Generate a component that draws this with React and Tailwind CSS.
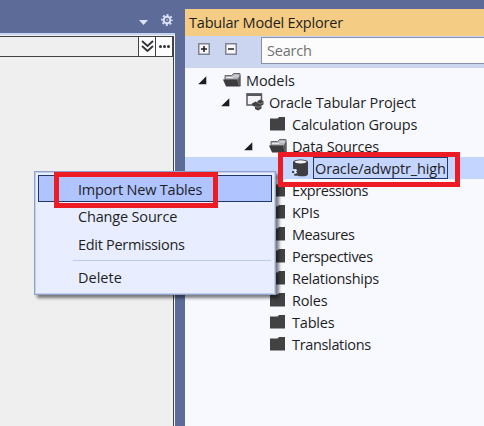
import React from "react";

function ClosedFolder() {
  return (
    <svg width="16" height="16" viewBox="0 0 16 16" className="shrink-0">
      <path d="M0 2.5H7.5L9 1H15V14.5H0Z" fill="#424242" />
    </svg>
  );
}

function OpenFolder() {
  return (
    <svg width="19" height="16" viewBox="0 0 19 16" className="shrink-0">
      <path d="M2 8V3.5H8.5L10.5 1.5H17V14L14.5 8Z" fill="#b4b4b8" stroke="#68686b" strokeWidth="1" />
      <path d="M3 5.5H10L11.5 4H15.5" fill="none" stroke="#e6e6ea" strokeWidth="1" />
      <path d="M0 7.5H14L16.5 14.5H3Z" fill="#3c3c3e" />
      <path d="M14.5 7.5L17.5 3V14.5H16Z" fill="#5e5e61" />
    </svg>
  );
}

function ProjectIcon() {
  return (
    <svg width="18" height="18" viewBox="0 0 18 18" className="shrink-0">
      <path d="M6 12H1V1H15.5V7" fill="#f3f3f8" stroke="#5a5a5f" strokeWidth="1.5" />
      <path d="M.5 .5H16V3H.5Z" fill="#55555a" />
      <path d="M6 10.5L9.5 8.5L11.5 9.5V8L14.5 6.5L17.5 8V11.5L15.5 12.5V15.5L12 17.5L9 16V13.8L6 12.5Z" fill="#424242" />
      <path d="M11.5 9.5L14.5 11L17 9.5M9 13L12 14.5L15 13" fill="none" stroke="#9a9aa0" strokeWidth=".7" />
    </svg>
  );
}

function DatabaseIcon() {
  return (
    <svg width="18" height="18" viewBox="0 0 18 18" className="shrink-0">
      <path d="M1 3Q1.5 .5 8.5 .5Q16 .5 16 3V15Q16 17.3 10 17.3Q4.5 17.3 4 15.5V10H1Z" fill="#3e3e40" />
      <ellipse cx="8.6" cy="2.8" rx="6" ry="1.6" fill="#f3f3f8" />
      <path d="M5 11L2.5 12.5L5 14" fill="none" stroke="#eef2ff" strokeWidth="1.2" />
      <path d="M0 12H2.2V14H0ZM2.2 14.8H5V16.8H2.2Z" fill="#424242" />
    </svg>
  );
}

function Expander() {
  return (
    <svg width="9" height="9" viewBox="0 0 9 9" className="shrink-0">
      <path d="M8.3 .2V8.3H.2Z" fill="#1e1e1e" />
    </svg>
  );
}

function TreeBox({ plus }) {
  return (
    <svg width="12" height="12" viewBox="0 0 12 12" className="shrink-0">
      <path d="M.75 .75H11.25V11.25H.75Z" fill="#f7f7fa" stroke="#7f8391" strokeWidth="1.5" />
      <path d={plus ? "M3 6H9M6 3V9" : "M3 6H9"} stroke="#1e1e1e" strokeWidth="1.5" />
    </svg>
  );
}

const folders = [
  ["Expressions", "tracking-[-0.42px]"],
  ["KPIs", "tracking-[-0.34px]"],
  ["Measures", "tracking-[-0.44px]"],
  ["Perspectives", "tracking-[-0.34px]"],
  ["Relationships", "tracking-[-0.27px]"],
  ["Roles", "tracking-[-0.16px]"],
  ["Tables", "tracking-[-0.2px]"],
  ["Translations", "tracking-[-0.34px]"],
];

function FolderRow({ label, track }) {
  return (
    <div className="flex h-[22px] items-center pl-[85px]">
      <ClosedFolder />
      <span className={"ml-[6px] pt-px " + track}>{label}</span>
    </div>
  );
}

function Document() {
  return (
    <div className="flex w-[175px] shrink-0 flex-col">
      <div className="flex h-[33px] shrink-0 items-start justify-end pr-[2px] pt-[14px]">
        <svg width="9" height="5" viewBox="0 0 9 5" className="mr-[13px] mt-[6px]">
          <path d="M0 0H9L4.5 5Z" fill="#dce3fa" />
        </svg>
        <svg width="12" height="12" viewBox="0 0 12 12">
          <circle cx="6" cy="6" r="3.3" fill="none" stroke="#dce3fa" strokeWidth="1.9" />
          <circle cx="6" cy="6" r="5" fill="none" stroke="#dce3fa" strokeWidth="1.8" strokeDasharray="2 1.927" strokeDashoffset="1" />
          <circle cx="6" cy="6" r=".8" fill="#dce3fa" />
        </svg>
      </div>
      <div className="h-[2px] shrink-0 bg-[#c9d3f2]" />
      <div className="flex flex-1 flex-col border-r border-[#f5f5f5] bg-[#efefef] pt-px">
        <div className="flex flex-1 flex-col border-r border-[#424246]">
          <div className="flex h-[21px] border-y border-r border-[#424246]">
            <div className="flex-1" />
            <div className="flex w-[17px] items-center justify-center border-l border-[#424246] bg-[#fcfcfc]">
              <svg width="13" height="13" viewBox="0 0 13 13">
                <path d="M1 1L6.5 6L12 1M1 6L6.5 11L12 6" fill="none" stroke="#333337" strokeWidth="1.8" />
              </svg>
            </div>
            <div className="flex w-[17px] items-center justify-center gap-px border-l border-[#424246] bg-[#fcfcfc]">
              <i className="size-[3px] rounded-full bg-[#333337]" />
              <i className="size-[3px] rounded-full bg-[#333337]" />
              <i className="size-[3px] rounded-full bg-[#333337]" />
            </div>
          </div>
        </div>
      </div>
    </div>
  );
}

function Explorer() {
  return (
    <div className="ml-[10px] mt-[9px] flex min-w-0 flex-1 flex-col bg-[#f8f9ff]">
      <div className="flex h-[27px] shrink-0 items-center bg-[#f5cc84] pl-[4px] tracking-[-0.2px]">Tabular Model Explorer</div>
      <div className="flex h-[32px] shrink-0 bg-[#ccd5f0] pt-px">
        <div className="flex h-[24px] items-center gap-[15px] pl-[13px]">
          <TreeBox plus />
          <TreeBox />
        </div>
        <div className="ml-[24px] flex h-[27px] flex-1 items-center border border-r-0 border-[#8591ad] bg-[#fcfcfc] pl-[5px] pt-px text-[#717171] tracking-[-0.2px]">Search</div>
      </div>
      <div className="flex flex-col pt-px">
        <div className="flex h-[22px] items-center pl-[13px]">
          <Expander />
          <span className="ml-[16px] flex"><OpenFolder /></span>
          <span className="ml-[4px] pt-px tracking-[-0.1px]">Models</span>
        </div>
        <div className="flex h-[22px] items-center pl-[36px]">
          <Expander />
          <span className="ml-[16px] flex"><ProjectIcon /></span>
          <span className="ml-[5px] pt-px tracking-[-0.16px]">Oracle Tabular Project</span>
        </div>
        <FolderRow label="Calculation Groups" track="tracking-[-0.18px]" />
        <div className="flex h-[22px] items-center pl-[59px]">
          <Expander />
          <span className="ml-[16px] flex"><OpenFolder /></span>
          <span className="ml-[4px] pt-px tracking-[-0.18px]">Data Sources</span>
        </div>
        <div className="flex h-[22px] items-center bg-[#c4d5ff] pl-[107px]">
          <DatabaseIcon />
          <span className="ml-[3px] flex h-[22px] w-[135px] items-center border border-[#203a70] pl-px pt-px tracking-[-0.13px]">Oracle/adwptr_high</span>
        </div>
        {folders.map(([label, track]) => <FolderRow key={label} label={label} track={track} />)}
      </div>
    </div>
  );
}

function ContextMenu() {
  return (
    <div className="absolute left-[34px] top-[171px] h-[124px] w-[242px] border border-[#91a3cd] bg-[#e8eeff] p-[3px] shadow-[3px_3px_3px_rgba(0,0,0,0.5)] outline-1 -outline-offset-2 outline-[#c3cfea]">
      <div className="flex h-[27px] items-center border border-[#1f3868] bg-[#b0c4ff] pl-[39px] pt-[2px] tracking-[-0.2px]">Import New Tables</div>
      <div className="flex h-[28px] items-center pl-[40px] pt-px tracking-[-0.17px]">Change Source</div>
      <div className="flex h-[28px] items-center pl-[40px] pt-px tracking-[-0.3px]">Edit Permissions</div>
      <div className="ml-[35px] mr-px mt-[2px] h-px bg-[#bccaed]" />
      <div className="flex h-[34px] items-center pl-[40px]">Delete</div>
    </div>
  );
}

export default function App() {
  return (
    <div className="relative flex h-[426px] w-[484px] overflow-hidden whitespace-nowrap bg-[#5d6b99] font-['Open_Sans','Noto_Sans',sans-serif] text-[14.5px] leading-[20px] text-[#1e1e1e]">
      <Document />
      <Explorer />
      <ContextMenu />
      <div className="absolute left-[54px] top-[172px] h-[36px] w-[164px] border-[5px] border-[#ed1c24]" />
      <div className="absolute left-[278px] top-[152px] h-[35px] w-[182px] border-[5px] border-[#ed1c24]" />
    </div>
  );
}
